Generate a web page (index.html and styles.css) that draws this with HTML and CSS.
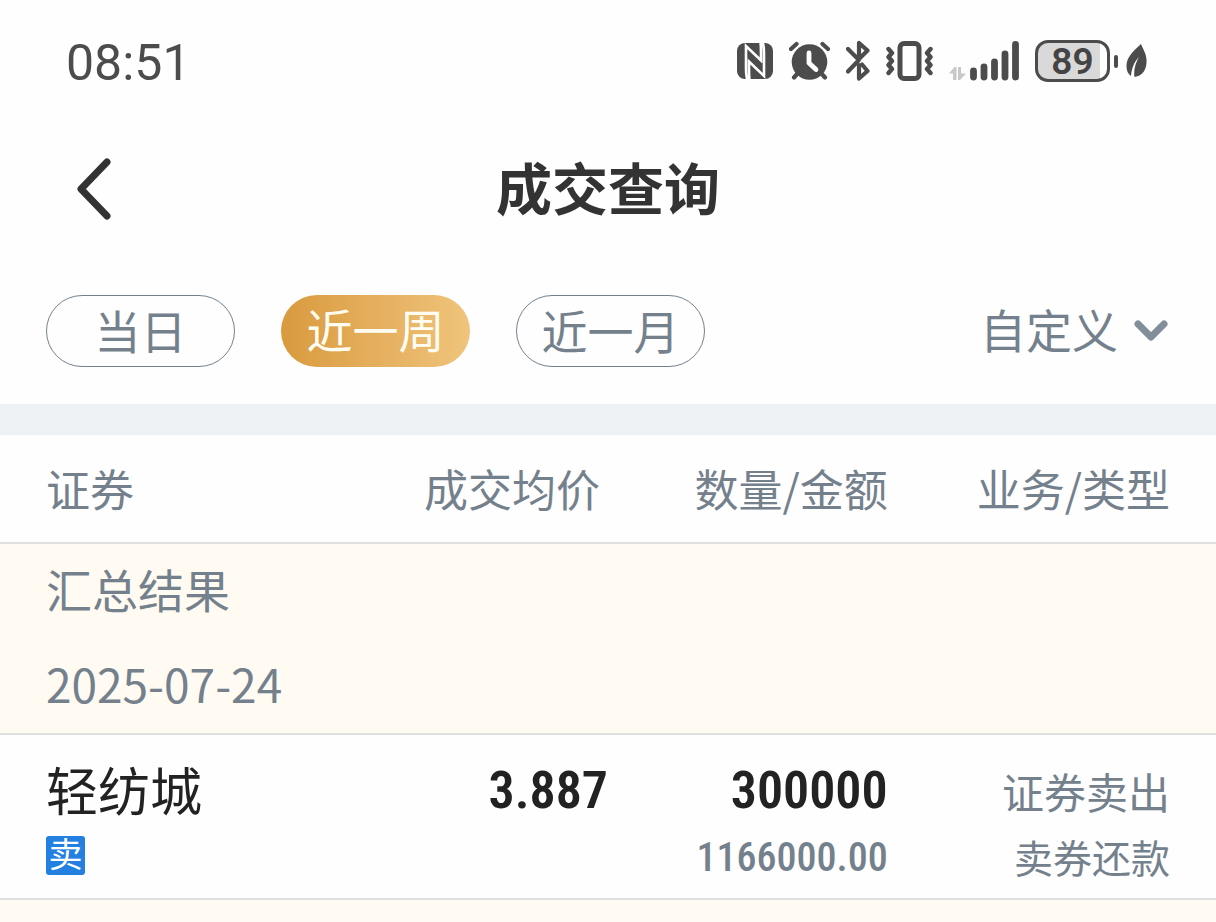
FILE: index.html
```html
<!DOCTYPE html>
<html lang="zh-CN">
  <head>
    <meta charset="utf-8">
    <meta name="viewport" content="width=device-width, initial-scale=1">
    <title>成交查询</title>
    <link rel="stylesheet" href="styles.css">
  </head>
  <body>
    <div class="status-bar">
      <span class="clock">08:51</span>
      <div class="status-icons">
        <!-- nfc -->
        <svg width="36" height="42" viewBox="0 0 36 42">
          <rect x="0" y="3" width="36" height="36" rx="8" fill="#4c4c4c"/>
          <path d="M10.500 40C9 36 9 32 9 28V6L24 20.500V13C24 9 24 6 23.500 2M25.500 2C27 6 27 10 27 14V36L12 21.500V29C12 33 12 36 12.500 40" fill="none" stroke="#fff" stroke-width="2.600"/>
        </svg>
        <!-- alarm -->
        <svg width="41" height="42" viewBox="0 0 41 42">
          <circle cx="20.500" cy="22" r="17.800" fill="#4c4c4c"/>
          <path d="M2 9L7.500 4M33.500 4L39 9M9 33L5 37.500M32 33L36 37.500" stroke="#4c4c4c" stroke-width="4.200" stroke-linecap="round"/>
          <path d="M20 13V23L27 29.500" fill="none" stroke="#fff" stroke-width="4.800" stroke-linecap="round" stroke-linejoin="round"/>
        </svg>
        <!-- bluetooth -->
        <svg width="24" height="42" viewBox="0 0 24 42">
          <path d="M2 9L12.500 19.500L21.500 10.500L13 3V18M2 31.500L12.500 20.500M16 24.500L21.500 31L13 38.500V25" fill="none" stroke="#4c4c4c" stroke-width="4.200" stroke-linecap="round" stroke-linejoin="round"/>
        </svg>
        <!-- vibrate -->
        <svg width="47" height="42" viewBox="0 0 47 42">
          <rect x="14" y="3.500" width="19" height="35" rx="4" fill="none" stroke="#4c4c4c" stroke-width="5"/>
          <path d="M2.500 9L6 13L2.500 17L6 21L2.500 25L6 29L2.500 33M44.500 9L41 13L44.500 17L41 21L44.500 25L41 29L44.500 33" fill="none" stroke="#4c4c4c" stroke-width="4.400" stroke-linecap="round" stroke-linejoin="round"/>
        </svg>
        <!-- signal -->
        <svg width="70" height="42" viewBox="0 0 70 42">
          <path d="M0 33.500L5.500 27H7.500V40H4V33.500ZM9 27H12V33.500H17L11 40H9Z" fill="#c8c8c8"/>
          <path d="M24.500 31V37M35 27V37M45.500 22V37M56 14V37M66.500 4.500V37" stroke="#4c4c4c" stroke-width="6.800" stroke-linecap="round"/>
        </svg>
        <div class="battery">
          <span class="battery-body">89</span>
          <span class="battery-tip"></span>
          <svg width="21" height="42" viewBox="0 0 21 42">
            <path d="M15 4C6 12 0 18 .500 27C.700 31 2 34 5 36C5.500 29 8 22 13 17C9.500 23 7.500 30 8.500 37C17 36 21 29 20.500 20C20.500 14 17 9 15 4Z" fill="#4c4c4c"/>
          </svg>
        </div>
      </div>
    </div>

    <header class="nav-bar">
      <button class="back" type="button" aria-label="返回">
        <svg width="36" height="62" viewBox="0 0 36 62">
          <path d="M31 4L5 31L31 58" fill="none" stroke="#333" stroke-width="7" stroke-linecap="round" stroke-linejoin="round"/>
        </svg>
      </button>
      <h1>成交查询</h1>
    </header>

    <div class="filters">
      <button class="pill" type="button">当日</button>
      <button class="pill active" type="button">近一周</button>
      <button class="pill" type="button">近一月</button>
      <label class="custom-range">
        <select aria-label="日期范围">
          <option>自定义</option>
        </select>
        <svg width="34" height="22" viewBox="0 0 34 22">
          <path d="M4 4L17 17L30 4" fill="none" stroke="#828f9b" stroke-width="7" stroke-linecap="round" stroke-linejoin="round"/>
        </svg>
      </label>
    </div>

    <table class="deals">
      <thead>
        <tr>
          <th class="col-name">证券</th>
          <th class="col-price">成交均价</th>
          <th class="col-amount">数量/金额</th>
          <th class="col-type">业务/类型</th>
        </tr>
      </thead>
      <tbody>
        <tr class="summary">
          <td colspan="4">汇总结果</td>
        </tr>
        <tr class="summary date">
          <td colspan="4">2025-07-24</td>
        </tr>
        <tr class="deal">
          <td>
            <div class="stock">轻纺城</div>
            <div class="sub"><span class="tag">卖</span></div>
          </td>
          <td><div class="number">3.887</div></td>
          <td>
            <div class="number">300000</div>
            <div class="sub money">1166000.00</div>
          </td>
          <td>
            <div class="business">证券卖出</div>
            <div class="sub kind">卖券还款</div>
          </td>
        </tr>
      </tbody>
    </table>
    <div class="rest"></div>
  </body>
</html>
```

FILE: styles.css
```css
* {
  box-sizing: border-box;
}
body {
  margin: 0;
  min-height: 100vh;
  display: flex;
  flex-direction: column;
  background: #fefefe;
  color: #74818d;
  font-family: "Noto Sans CJK SC", sans-serif;
}
svg {
  display: block;
}
button, select {
  font-family: inherit;
  color: inherit;
  padding: 0;
  border: none;
  background: none;
}

/* status bar */
.status-bar {
  display: flex;
  justify-content: space-between;
  align-items: center;
  height: 122px;
  padding: 0 69px 0 66px;
}
.clock {
  padding-top: 4px;
  font-family: Roboto, sans-serif;
  font-size: 50px;
  color: #4c4c4c;
}
.status-icons {
  display: flex;
  gap: 16px;
}
.battery {
  display: flex;
  align-items: center;
}
.battery-body {
  width: 75px;
  height: 42px;
  border: 3px solid #4c4c4c;
  border-radius: 13px;
  background: linear-gradient(to right, #d9d9d9 62px, #fefefe 62px);
  font-family: Roboto, sans-serif;
  font-size: 37px;
  font-weight: 600;
  line-height: 38px;
  text-align: center;
  color: #444;
}
.battery-tip {
  width: 4px;
  height: 13px;
  margin: 0 8px 0 4px;
  border-radius: 2px;
  background: #4c4c4c;
}

/* title */
.nav-bar {
  display: grid;
  grid-template-columns: 1fr auto 1fr;
  align-items: center;
  height: 134px;
  padding: 0 76px;
}
.back {
  justify-self: start;
}
h1 {
  margin: 0;
  padding-bottom: 6px;
  font-size: 56px;
  line-height: 80px;
  color: #333;
}

/* filters */
.filters {
  display: flex;
  align-items: center;
  gap: 46px;
  padding: 39px 48px 37px 46px;
  border-bottom: 31px solid #edf1f4;
}
.pill {
  width: 189px;
  height: 72px;
  padding-bottom: 6px;
  border: 1px solid #74818d;
  border-radius: 36px;
  font-size: 46px;
}
.pill.active {
  border: none;
  background: linear-gradient(to right, #d99a3e, #f0c47c);
  color: #fffdf2;
}
.custom-range {
  display: flex;
  align-items: center;
  gap: 16px;
  margin-left: auto;
}
.custom-range select {
  appearance: none;
  height: 72px;
  padding-bottom: 6px;
  font-size: 46px;
}

/* deals */
.deals {
  width: 100%;
  border-collapse: collapse;
  table-layout: fixed;
}
th, td {
  padding: 0;
  text-align: right;
  font-weight: normal;
}
th {
  height: 108px;
  padding-bottom: 2px;
  font-size: 44px;
  line-height: 64px;
}
th:first-child, td:first-child {
  padding-left: 46px;
  text-align: left;
}
th:last-child, td:last-child {
  padding-right: 46px;
}
.col-name {
  width: 25%;
}
.col-price {
  width: 25%;
  padding-right: 8px;
}
.col-amount {
  width: 23%;
}
thead tr, .date, .deal {
  border-bottom: 2px solid #dedfe0;
}
.summary, .rest {
  background: #fffbf2;
}
.summary td {
  height: 95px;
  padding-bottom: 6px;
  font-size: 46px;
  line-height: 64px;
}
.date td {
  height: 96px;
}
.deal td {
  padding-top: 26px;
  padding-bottom: 21px;
  vertical-align: top;
}
.stock, .number, .business {
  height: 60px;
  line-height: 60px;
}
.stock {
  font-size: 52px;
  line-height: 56px;
  color: #222;
}
.number {
  font-family: "Roboto Condensed", "Liberation Sans Narrow", Roboto, sans-serif;
  font-size: 52px;
  font-weight: 600;
  color: #222;
}
.business {
  font-size: 42px;
}
.sub {
  height: 40px;
  margin-top: 15px;
  margin-bottom: 1px;
  line-height: 40px;
}
.tag {
  display: block;
  width: 39px;
  height: 39px;
  border-radius: 3px;
  background: #2380e0;
  font-size: 34px;
  line-height: 34px;
  text-align: center;
  color: #fff;
}
.money {
  font-family: "Roboto Condensed", "Liberation Sans Narrow", Roboto, sans-serif;
  font-size: 40px;
  font-weight: 500;
  line-height: 44px;
}
.kind {
  font-size: 39px;
}
.rest {
  flex: 1;
}
```
